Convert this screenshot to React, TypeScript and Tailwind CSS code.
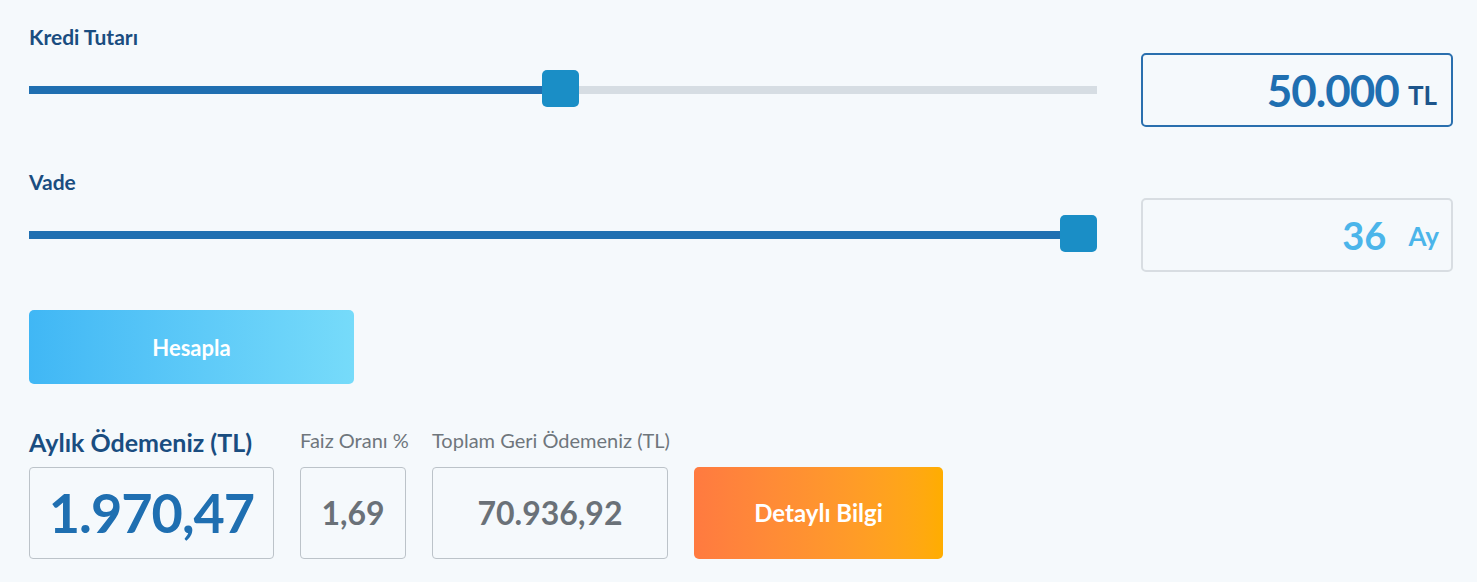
import { useState } from "react";

const font = { fontFamily: "Lato, 'Noto Sans', sans-serif" };

interface RangeProps {
  value: number;
  min: number;
  max: number;
}

// Basit slider görünümü: dolu iz + kare tutamak
const Range = ({ value, min, max }: RangeProps) => {
  const pct = (value - min) / (max - min);
  return (
    <div className="relative h-[37px] w-full">
      <div className="absolute left-0 right-0 top-[16px] h-2 bg-[#d6dde3]" />
      <div
        className="absolute left-0 top-[16px] h-2 bg-[#1f6fb1]"
        style={{ width: `calc(${pct} * (100% - 37px) + 18px)` }}
      />
      <div
        className="absolute top-0 h-[37px] w-[37px] rounded-[5px] bg-[#1a8ec6]"
        style={{ left: `calc(${pct} * (100% - 37px))` }}
      />
    </div>
  );
};

export default function App() {
  const [amount] = useState(50000);
  const [term] = useState(36);

  return (
    <div
      className="min-h-[582px] w-full bg-[#f5f9fc] pl-[29px] pr-[24px] pt-[24px]"
      style={font}
    >
      {/* Kredi Tutarı */}
      <div className="flex items-end gap-[44px]">
        <div className="flex-1">
          <div className="mb-1 text-[21px] font-bold leading-[25px] text-[#1a4d80]">
            Kredi Tutarı
          </div>
          <div className="flex h-[74px] items-center pb-[3px]">
            <Range value={amount} min={500} max={100000} />
          </div>
        </div>
        <div className="flex h-[74px] w-[312px] items-center justify-end gap-[9px] rounded-[5px] border-2 border-[#2a6fae] pr-[14px]">
          <span className="text-[44px] font-bold leading-none tracking-[-1px] text-[#1f6fb1]">
            50.000
          </span>
          <span className="mt-[10px] text-[26px] font-bold leading-none text-[#1d558b]">
            TL
          </span>
        </div>
      </div>

      {/* Vade */}
      <div className="mt-[42px] flex items-end gap-[44px]">
        <div className="flex-1">
          <div className="mb-1 text-[21px] font-bold leading-[25px] text-[#1a4d80]">
            Vade
          </div>
          <div className="flex h-[74px] items-center pb-[3px]">
            <Range value={term} min={3} max={36} />
          </div>
        </div>
        <div className="flex h-[74px] w-[312px] items-center justify-end gap-[22px] rounded-[5px] border-2 border-[#d8dde2] pr-[12px]">
          <span className="text-[38px] font-bold leading-none text-[#4bb5ea]">
            {term}
          </span>
          <span className="mt-[2px] text-[26px] font-bold leading-none text-[#4bb5ea]">
            Ay
          </span>
        </div>
      </div>

      {/* Hesapla */}
      <button className="mt-[38px] flex h-[74px] w-[325px] items-center justify-center rounded-[5px] bg-gradient-to-r from-[#40b7f5] to-[#76dbfa] text-[22px] font-bold text-white">
        Hesapla
      </button>

      {/* Sonuçlar */}
      <div className="mt-[43px] flex items-end gap-[26px]">
        <div className="flex w-[245px] flex-col">
          <div className="mb-[10px] whitespace-nowrap text-[25px] font-bold leading-[30px] text-[#1a4d80]">
            Aylık Ödemeniz (TL)
          </div>
          <div className="flex h-[92px] w-full items-center justify-center rounded-[4px] border border-[#bcc3c9] text-[54px] font-bold leading-none tracking-[-1px] text-[#1f6fb1]">
            1.970,47
          </div>
        </div>
        <div className="flex w-[106px] flex-col">
          <div className="mb-[15px] whitespace-nowrap text-[20px] leading-[24px] text-[#6f767c]">
            Faiz Oranı %
          </div>
          <div className="flex h-[92px] w-full items-center justify-center rounded-[4px] border border-[#bcc3c9] text-[32px] font-bold leading-none text-[#6a7178]">
            1,69
          </div>
        </div>
        <div className="flex w-[236px] flex-col">
          <div className="mb-[15px] whitespace-nowrap text-[20px] leading-[24px] text-[#6f767c]">
            Toplam Geri Ödemeniz (TL)
          </div>
          <div className="flex h-[92px] w-full items-center justify-center rounded-[4px] border border-[#bcc3c9] text-[32px] font-bold leading-none text-[#6a7178]">
            70.936,92
          </div>
        </div>
        <button className="flex h-[92px] w-[249px] items-center justify-center rounded-[5px] bg-gradient-to-r from-[#ff7a40] to-[#ffad00] text-[24px] font-bold text-white">
          Detaylı Bilgi
        </button>
      </div>
    </div>
  );
}
